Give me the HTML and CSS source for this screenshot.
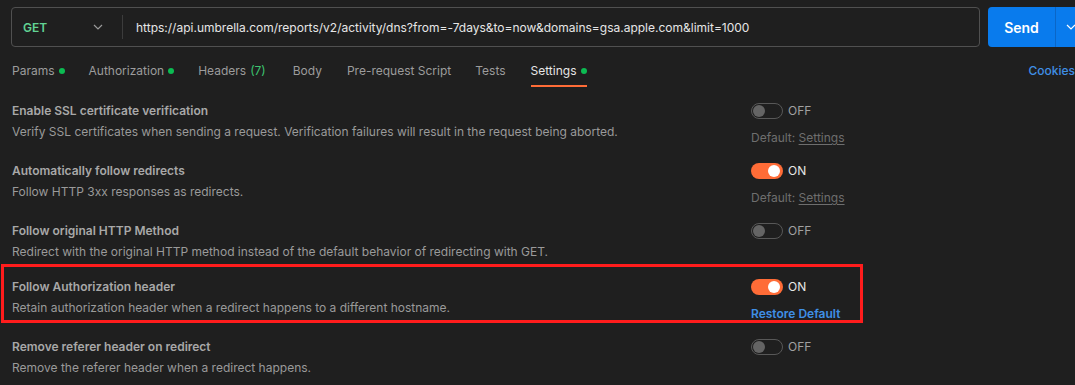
FILE: index.html
```html
<!DOCTYPE html>
<html>
<head>
<meta charset="utf-8">
<link rel="stylesheet" href="styles.css">
</head>
<body>
<div class="page">
  <div class="topbar">
    <div class="urlbox">
      <div class="method">
        <span class="method-name">GET</span>
        <svg class="chev" width="10" height="6" viewBox="0 0 10 6"><path d="M1 1l4 4 4-4" fill="none" stroke="#9a9a9a" stroke-width="1.2"/></svg>
      </div>
      <div class="divider"></div>
      <div class="url">https://api.umbrella.com/reports/v2/activity/dns?from=-7days&amp;to=now&amp;domains=gsa.apple.com&amp;limit=1000</div>
    </div>
    <div class="send">
      <span class="send-label">Send</span>
      <span class="send-sep"></span>
      <span class="send-more"><svg width="10" height="6" viewBox="0 0 10 6"><path d="M1 1l4 4 4-4" fill="none" stroke="#ffffff" stroke-width="1.2"/></svg></span>
    </div>
  </div>

  <div class="tabs">
    <div class="tab-list">
      <span class="tab tab-params">Params<i class="dot"></i></span>
      <span class="tab tab-auth">Authorization<i class="dot"></i></span>
      <span class="tab tab-headers">Headers <span class="count">(7)</span></span>
      <span class="tab tab-body">Body</span>
      <span class="tab">Pre-request Script</span>
      <span class="tab tab-tests">Tests</span>
      <span class="tab active">Settings<i class="dot"></i></span>
    </div>
    <span class="cookies">Cookies</span>
  </div>

  <div class="settings">
    <div class="row">
      <div class="info">
        <div class="title">Enable SSL certificate verification</div>
        <div class="desc">Verify SSL certificates when sending a request. Verification failures will result in the request being aborted.</div>
      </div>
      <div class="control">
        <div class="switch-line"><span class="switch off"><i class="knob"></i></span><span class="state">OFF</span></div>
        <div class="default">Default: <u>Settings</u></div>
      </div>
    </div>
    <div class="row">
      <div class="info">
        <div class="title">Automatically follow redirects</div>
        <div class="desc">Follow HTTP 3xx responses as redirects.</div>
      </div>
      <div class="control">
        <div class="switch-line"><span class="switch on"><i class="knob"></i></span><span class="state on-text">ON</span></div>
        <div class="default">Default: <u>Settings</u></div>
      </div>
    </div>
    <div class="row short">
      <div class="info">
        <div class="title">Follow original HTTP Method</div>
        <div class="desc">Redirect with the original HTTP method instead of the default behavior of redirecting with GET.</div>
      </div>
      <div class="control">
        <div class="switch-line"><span class="switch off"><i class="knob"></i></span><span class="state">OFF</span></div>
      </div>
    </div>
    <div class="row highlight">
      <div class="info">
        <div class="title">Follow Authorization header</div>
        <div class="desc">Retain authorization header when a redirect happens to a different hostname.</div>
      </div>
      <div class="control">
        <div class="switch-line"><span class="switch on"><i class="knob"></i></span><span class="state on-text">ON</span></div>
        <div class="restore">Restore Default</div>
      </div>
    </div>
    <div class="row">
      <div class="info">
        <div class="title">Remove referer header on redirect</div>
        <div class="desc">Remove the referer header when a redirect happens.</div>
      </div>
      <div class="control">
        <div class="switch-line"><span class="switch off"><i class="knob"></i></span><span class="state">OFF</span></div>
      </div>
    </div>
  </div>
</div>
</body>
</html>
```

FILE: styles.css
```css
html, body {
  margin: 0;
  padding: 0;
  background: #1f1f1f;
  overflow: hidden;
}
.page {
  width: 1075px;
  height: 385px;
  overflow: hidden;
  font-family: Inter, "Noto Sans", sans-serif;
  font-size: 12px;
  color: #a6a6a6;
}
.topbar {
  display: flex;
  padding: 7px 0 0 11px;
  gap: 8px;
}
.urlbox {
  width: 967px;
  height: 38px;
  border: 1px solid #505050;
  border-radius: 4px;
  display: flex;
  align-items: center;
  flex-shrink: 0;
}
.method {
  width: 98px;
  padding-left: 11px;
  padding-right: 7px;
  display: flex;
  align-items: center;
  justify-content: space-between;
  box-sizing: border-box;
}
.method-name {
  color: #62d394;
  font-weight: 600;
  font-size: 12px;
}
.chev { display: block; }
.divider {
  width: 1px;
  height: 24px;
  background: #3c3c3c;
  margin-left: 12px;
}
.url {
  margin-left: 13px;
  color: #e6e6e6;
  font-size: 12px;
  white-space: nowrap;
}
.send {
  flex-shrink: 0;
  width: 110px;
  height: 40px;
  background: #097bed;
  border-radius: 4px;
  display: flex;
  align-items: center;
}
.send-label {
  width: 67px;
  text-align: center;
  color: #ffffff;
  font-weight: 600;
  font-size: 14px;
}
.send-sep {
  width: 1px;
  height: 40px;
  background: #0a66c7;
}
.send-more {
  padding-left: 10px;
  display: flex;
}
.tabs {
  display: flex;
  justify-content: space-between;
  align-items: stretch;
  height: 32px;
  margin-top: 8px;
  padding-left: 12px;
}
.tab-list {
  display: flex;
  gap: 24px;
}
.tab {
  display: flex;
  align-items: center;
  color: #9c9c9c;
  font-size: 12px;
  white-space: nowrap;
  height: 30px;
  border-bottom: 2px solid transparent;
}
.tab-params .dot,
.tab-auth .dot {
  margin-left: 4px;
}
.tab-headers { margin-right: 3px; }
.tab-body { margin-right: 1px; }
.tab-tests { margin-right: 1px; }
.tab .count {
  color: #3cc46f;
  margin-left: 4px;
}
.tab.active {
  color: #e6e6e6;
  border-bottom-color: #ff6c37;
}
.dot {
  display: inline-block;
  width: 6px;
  height: 6px;
  border-radius: 50%;
  background: #0cbb52;
  margin-left: 5px;
  margin-top: 1px;
}
.cookies {
  color: #3f8fe6;
  font-weight: 500;
  display: flex;
  align-items: center;
  height: 30px;
  margin-right: 0;
}
.settings {
  padding-left: 12px;
  padding-top: 4px;
}
.row {
  display: flex;
  padding: 9px 0 6px;
  height: 45px;
  position: relative;
}
.row.short {
  height: 41px;
}
.info {
  width: 739px;
}
.title {
  line-height: 21px;
  font-weight: 600;
  color: #a8a8a8;
}
.desc {
  line-height: 21px;
  color: #9a9a9a;
}
.control {
  display: flex;
  flex-direction: column;
}
.switch-line {
  height: 21px;
  flex-shrink: 0;
  display: flex;
  align-items: center;
}
.switch {
  width: 32px;
  height: 16px;
  box-sizing: border-box;
  border-radius: 8px;
  position: relative;
  display: inline-block;
}
.switch.off {
  border: 1px solid #585858;
}
.switch.on {
  background: #ff6c37;
}
.knob {
  position: absolute;
  width: 12px;
  height: 12px;
  border-radius: 50%;
}
.switch.off .knob {
  left: 1px;
  top: 1px;
  background: #646464;
}
.switch.on .knob {
  right: 3px;
  top: 2px;
  background: #ffffff;
}
.state {
  margin-left: 5px;
  color: #a0a0a0;
  font-size: 12px;
}
.state.on-text {
  color: #e6e6e6;
}
.default,
.restore {
  margin-top: 6px;
  padding-top: 4px;
  line-height: 14px;
  font-size: 12px;
}
.default {
  color: #6e6e6e;
}
.default u {
  text-underline-offset: 2px;
}
.restore {
  color: #3f8fe6;
  font-weight: 600;
}
.row.highlight::after {
  content: "";
  position: absolute;
  left: -11px;
  top: -3px;
  width: 856px;
  height: 53px;
  border: 3px solid #ff1c1c;
}
```
